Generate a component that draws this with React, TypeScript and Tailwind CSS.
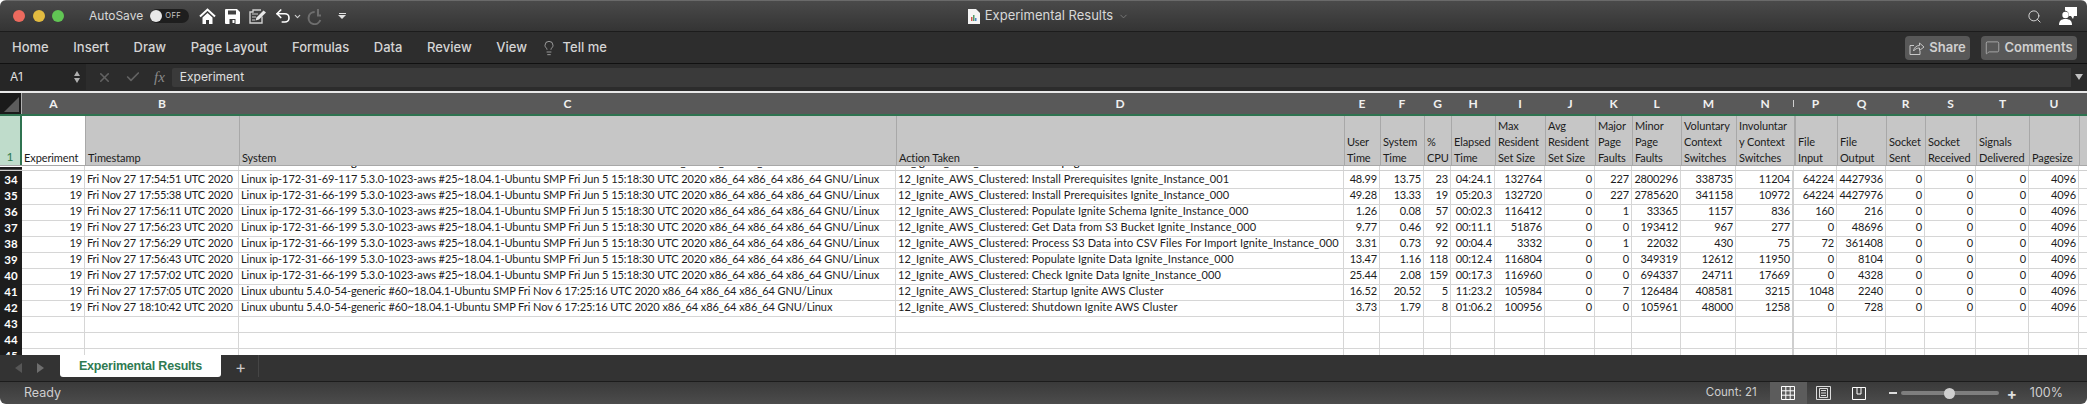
import { ChevronDown, Check, Lightbulb, MessageSquare, Search, Undo2, X } from "lucide-react";

const COLS =
    "grid grid-cols-[22px_63px_154px_657px_448px_36px_44px_27px_44px_50px_50px_37px_49px_55px_58px_43px_49px_39px_51px_53px_50px_8px]";

const ui = "font-['Inter',sans-serif]";
const sheet = "font-['Lato',sans-serif]";

const letters = ["A", "B", "C", "D", "E", "F", "G", "H", "I", "J", "K", "L", "M", "N", "P", "Q", "R", "S", "T", "U", ""];

const headers = [
    "Experiment",
    "Timestamp",
    "System",
    "Action Taken",
    "User\nTime",
    "System\nTime",
    "%\nCPU",
    "Elapsed\nTime",
    "Max\nResident\nSet Size",
    "Avg\nResident\nSet Size",
    "Major\nPage\nFaults",
    "Minor\nPage\nFaults",
    "Voluntary\nContext\nSwitches",
    "Involuntar\ny Context\nSwitches",
    "File\nInput",
    "File\nOutput",
    "Socket\nSent",
    "Socket\nReceived",
    "Signals\nDelivered",
    "Pagesize",
    "",
];

const sysA = (host: string) =>
    `Linux ${host} 5.3.0-1023-aws #25~18.04.1-Ubuntu SMP Fri Jun 5 15:18:30 UTC 2020 x86_64 x86_64 x86_64 GNU/Linux`;
const sysB = "Linux ubuntu 5.4.0-54-generic #60~18.04.1-Ubuntu SMP Fri Nov 6 17:25:16 UTC 2020 x86_64 x86_64 x86_64 GNU/Linux";
const act = "12_Ignite_AWS_Clustered: ";

const rows: { n: number; cells: string[] }[] = [
    { n: 34, cells: ["19", "Fri Nov 27 17:54:51 UTC 2020", sysA("ip-172-31-69-117"), act + "Install Prerequisites Ignite_Instance_001", "48.99", "13.75", "23", "04:24.1", "132764", "0", "227", "2800296", "338735", "11204", "64224", "4427936", "0", "0", "0", "4096"] },
    { n: 35, cells: ["19", "Fri Nov 27 17:55:38 UTC 2020", sysA("ip-172-31-66-199"), act + "Install Prerequisites Ignite_Instance_000", "49.28", "13.33", "19", "05:20.3", "132720", "0", "227", "2785620", "341158", "10972", "64224", "4427976", "0", "0", "0", "4096"] },
    { n: 36, cells: ["19", "Fri Nov 27 17:56:11 UTC 2020", sysA("ip-172-31-66-199"), act + "Populate Ignite Schema Ignite_Instance_000", "1.26", "0.08", "57", "00:02.3", "116412", "0", "1", "33365", "1157", "836", "160", "216", "0", "0", "0", "4096"] },
    { n: 37, cells: ["19", "Fri Nov 27 17:56:23 UTC 2020", sysA("ip-172-31-66-199"), act + "Get Data from S3 Bucket Ignite_Instance_000", "9.77", "0.46", "92", "00:11.1", "51876", "0", "0", "193412", "967", "277", "0", "48696", "0", "0", "0", "4096"] },
    { n: 38, cells: ["19", "Fri Nov 27 17:56:29 UTC 2020", sysA("ip-172-31-66-199"), act + "Process S3 Data into CSV Files For Import Ignite_Instance_000", "3.31", "0.73", "92", "00:04.4", "3332", "0", "1", "22032", "430", "75", "72", "361408", "0", "0", "0", "4096"] },
    { n: 39, cells: ["19", "Fri Nov 27 17:56:43 UTC 2020", sysA("ip-172-31-66-199"), act + "Populate Ignite Data Ignite_Instance_000", "13.47", "1.16", "118", "00:12.4", "116804", "0", "0", "349319", "12612", "11950", "0", "8104", "0", "0", "0", "4096"] },
    { n: 40, cells: ["19", "Fri Nov 27 17:57:02 UTC 2020", sysA("ip-172-31-66-199"), act + "Check Ignite Data Ignite_Instance_000", "25.44", "2.08", "159", "00:17.3", "116960", "0", "0", "694337", "24711", "17669", "0", "4328", "0", "0", "0", "4096"] },
    { n: 41, cells: ["19", "Fri Nov 27 17:57:05 UTC 2020", sysB, act + "Startup Ignite AWS Cluster", "16.52", "20.52", "5", "11:23.2", "105984", "0", "7", "126484", "408581", "3215", "1048", "2240", "0", "0", "0", "4096"] },
    { n: 42, cells: ["19", "Fri Nov 27 18:10:42 UTC 2020", sysB, act + "Shutdown Ignite AWS Cluster", "3.73", "1.79", "8", "01:06.2", "100956", "0", "0", "105961", "48000", "1258", "0", "728", "0", "0", "0", "4096"] },
];

const empty = Array.from({ length: 20 }, () => "");
const textCols = [1, 2, 3];

const menu = ["Home", "Insert", "Draw", "Page Layout", "Formulas", "Data", "Review", "View"];

// system and action columns run a bit wider than the rest
const tracking = (i: number) => (i === 2 ? "tracking-[-0.07px]" : i === 3 ? "tracking-[0.1px]" : "tracking-[-0.15px]");

function HomeIcon() {
    return (
        <svg width="17" height="17" viewBox="0 0 17 17" fill="none">
            <path d="M1 8.5 8.5 1.5 16 8.5" stroke="white" strokeWidth="2" />
            <path d="M3.5 9.5V16h3.5v-4h3v4h3.5V9.5L8.5 5z" fill="white" />
        </svg>
    );
}

function SaveIcon() {
    return (
        <svg width="15" height="15" viewBox="0 0 15 15">
            <path fillRule="evenodd" d="M1 0h11l3 3v11a1 1 0 0 1-1 1H1a1 1 0 0 1-1-1V1a1 1 0 0 1 1-1zm2 1.5v4h8v-4zM4.500 10v5h6v-5z" fill="white" />
            <rect x="7.500" y="11" width="2" height="3" fill="white" />
        </svg>
    );
}

function EditIcon() {
    return (
        <svg width="18" height="15" viewBox="0 0 18 15" fill="none">
            <path d="M13 7.500V14H1V3h3V1h8" stroke="#cfcfcf" strokeWidth="1.400" />
            <path d="M3 5h6M3 8h4M3 11h3" stroke="#cfcfcf" strokeWidth="1" />
            <path d="M6.500 11.500 7.500 8.500 14.500 1.500 17 3.500 10 10.500z" fill="#e8e8e8" />
        </svg>
    );
}

function RedoIcon() {
    return (
        <svg width="16" height="17" viewBox="0 0 16 17" fill="none" stroke="#6e6e6e" strokeWidth="2">
            <path d="M6 4.500a6 6 0 1 0 8 5.500" transform="rotate(20 8 9)" />
            <path d="M11 1v6.500h3" />
        </svg>
    );
}

function ShareIcon() {
    return (
        <svg width="16" height="15" viewBox="0 0 16 15" fill="none" stroke="#c8c8c8" strokeWidth="1">
            <path d="M5 5.500H1v9h10V11" />
            <path d="M4.500 11c.5-3.500 3-5.500 6-5.500V3l4.500 4-4.500 3.500V8c-2.500 0-4.500 1-6 3z" />
        </svg>
    );
}

function UserIcon() {
    return (
        <svg width="18" height="18" viewBox="0 0 18 18" fill="white">
            <path d="M6 0h12v9h-3l-1 3-2-3h-2c0-3-1-5-4-5.500z" />
            <circle cx="6.500" cy="8" r="3.200" />
            <path d="M0 18c0-4 2-6 6.500-6S13 14 13 18z" />
        </svg>
    );
}

function FileIcon() {
    return (
        <svg width="12" height="15" viewBox="0 0 12 15">
            <path d="M0 0h8l4 4v11H0z" fill="#f4f4f4" />
            <rect x="3" y="8" width="1.500" height="4" fill="#d0564b" />
            <rect x="5" y="6" width="1.500" height="6" fill="#4f9a6a" />
            <rect x="7" y="9" width="1.500" height="3" fill="#4a83c6" />
        </svg>
    );
}

function GridIcon() {
    return (
        <svg width="14" height="14" viewBox="0 0 14 14" fill="none" stroke="white" strokeWidth="1">
            <path d="M.5.500h13v13H.500zM.5 4.800h13M.5 9.200h13M4.800.500v13M9.200.500v13" />
        </svg>
    );
}

function PageIcon() {
    return (
        <svg width="15" height="14" viewBox="0 0 15 14" fill="none" stroke="#dcdcdc" strokeWidth="1">
            <path d="M.5.500h14v13H.500z" />
            <path d="M3.500 2.500h8v9h-8zM5 4.500h5M5 7h5M5 9.500h5" />
        </svg>
    );
}

function BreakIcon() {
    return (
        <svg width="14" height="13" viewBox="0 0 14 13" fill="none" stroke="white" strokeWidth="1">
            <path d="M.5.500h13v12H.500zM5 .500v6.500h4V.500" />
        </svg>
    );
}

function RowHeader({ label, className = "" }: { label: string; className?: string }) {
    return (
        <div className={`flex items-center justify-center border-b border-[#4a4a4a] bg-[#1d1d1d] text-[11.500px] font-bold text-white ${className}`}>
            {label}
        </div>
    );
}

function Row({ n, cells }: { n: number; cells: string[] }) {
    return (
        <div className={`${COLS} h-4`}>
            <RowHeader label={String(n)} />
            {cells.map((c, i) => (
                <div
                    key={i}
                    className={`overflow-hidden whitespace-nowrap border-b border-r border-[#d6d6d6] px-[2px] text-[11px] leading-[15px] text-[#1c1c1c] ${tracking(i)} ${
                        textCols.includes(i) ? "text-left" : "text-right"
                    } ${i === 13 ? "border-r-[2px] border-r-[#cfcfcf]" : ""}`}
                >
                    {c}
                </div>
            ))}
            <div className="border-b border-[#d6d6d6]" />
        </div>
    );
}

export default function App() {
    return (
        <div className={`flex h-[404px] w-[2087px] flex-col overflow-hidden rounded-[6px] bg-white ${ui}`}>
            {/* title bar */}
            <div className="grid h-8 shrink-0 grid-cols-[1fr_auto_1fr] items-center border-t border-b border-t-[#6a6a6a] border-b-[#1c1c1c] bg-gradient-to-b from-[#4a4a4a] to-[#343434]">
                <div className="flex items-center">
                    <div className="ml-[13px] flex gap-[7.500px]">
                        <span className="size-[12px] rounded-full bg-[#ec6a5e]" />
                        <span className="size-[12px] rounded-full bg-[#e2bb40]" />
                        <span className="size-[12px] rounded-full bg-[#61c554]" />
                    </div>
                    <span className="ml-[25px] text-[12px] text-[#d8d8d8]">AutoSave</span>
                    <div className="ml-[7px] flex h-[14px] w-[39px] items-center rounded-full bg-[#1e1e1e]">
                        <span className="size-[12px] rounded-full bg-[#e8e8e8]" />
                        <span className="ml-[3px] text-[7.500px] tracking-[0.5px] text-[#c8c8c8]">OFF</span>
                    </div>
                    <div className="ml-[10px] flex items-center">
                        <HomeIcon />
                    </div>
                    <div className="ml-[9px] flex items-center">
                        <SaveIcon />
                    </div>
                    <div className="ml-[9px] flex items-center">
                        <EditIcon />
                    </div>
                    <Undo2 className="ml-[7px] size-[18px] text-white" strokeWidth={2.200} />
                    <ChevronDown className="ml-[1px] size-[9px] text-[#d0d0d0]" strokeWidth={3} />
                    <div className="ml-[5px] flex items-center">
                        <RedoIcon />
                    </div>
                    <div className="ml-[15px] flex w-[8px] flex-col items-center gap-[1px]">
                        <span className="h-[1.500px] w-[7px] bg-[#e0e0e0]" />
                        <span className="h-0 w-0 border-x-[4px] border-t-[4px] border-x-transparent border-t-[#e0e0e0]" />
                    </div>
                </div>
                <div className="flex items-center gap-[5px] pl-[10px] text-[13px] text-[#d8d8d8]">
                    <FileIcon />
                    <span>Experimental Results</span>
                    <ChevronDown className="size-[11px] text-[#7a7a7a]" />
                </div>
                <div className="flex items-center justify-end">
                    <Search className="size-[15px] text-[#dcdcdc]" strokeWidth={1.500} />
                    <div className="ml-[17px] mr-[10px] flex items-center">
                        <UserIcon />
                    </div>
                </div>
            </div>

            {/* ribbon tabs */}
            <div className="flex h-[32px] shrink-0 items-center justify-between border-b-[1.500px] border-[#111] bg-[#2d2d2d]">
                <div className="flex items-center gap-[24.600px] pl-3 text-[13px] font-medium text-[#d4d4d4]">
                    {menu.map((m) => (
                        <span key={m}>{m}</span>
                    ))}
                    <span className="-ml-[11px] flex items-center gap-[4px]">
                        <Lightbulb className="size-[16px] text-[#cfcfcf]" strokeWidth={1} />
                        <span className="ml-[2px]">Tell me</span>
                    </span>
                </div>
                <div className="flex items-center gap-[11px] pr-[10px] text-[13px] font-semibold text-[#d0d0d0]">
                    <div className="flex h-[24px] w-[65px] items-center justify-center gap-[4px] rounded-[4px] bg-[#585858]">
                        <ShareIcon />
                        Share
                    </div>
                    <div className="flex h-[24px] w-[96px] items-center justify-center gap-[4px] rounded-[4px] bg-[#585858]">
                        <MessageSquare className="size-[15px]" strokeWidth={1} />
                        Comments
                    </div>
                </div>
            </div>

            {/* formula bar */}
            <div className="flex h-[26px] shrink-0 items-center bg-[#2c2c2c] text-[12px] text-[#e0e0e0]">
                <div className="flex h-full w-[86px] items-center justify-between bg-[#262626] pl-[10px] pr-[6px]">
                    <span>A1</span>
                    <div className="flex flex-col gap-[2px]">
                        <span className="h-0 w-0 border-x-[3.500px] border-b-[5px] border-x-transparent border-b-[#b0b0b0]" />
                        <span className="h-0 w-0 border-x-[3.500px] border-t-[5px] border-x-transparent border-t-[#b0b0b0]" />
                    </div>
                </div>
                <X className="ml-[11px] size-[15px] text-[#626262]" strokeWidth={2.500} />
                <Check className="ml-[13px] size-[16px] text-[#626262]" strokeWidth={2.500} />
                <span className="ml-[13px] font-['Liberation_Serif',serif] text-[15px] italic text-[#8a8a8a]">fx</span>
                <div className="ml-[7px] flex h-[19px] flex-1 items-center rounded-l-[2px] bg-[#3a3a3a] pl-2 text-[12px]">Experiment</div>
                <div className="flex w-[16px] justify-center">
                    <span className="h-0 w-0 border-x-[4px] border-t-[6px] border-x-transparent border-t-[#c0c0c0]" />
                </div>
            </div>

            <div className="h-[1px] shrink-0 bg-[#2c2c2c]" />
            <div className="h-[2px] shrink-0 bg-[#e8e8e8]" />

            {/* sheet */}
            <div className={`flex-1 overflow-hidden bg-white ${sheet}`}>
                <div className={`${COLS} h-[23px] border-b-[2px] border-[#2f7350] bg-[#595959]`}>
                    <div className="relative border-r border-[#b0b0b0] bg-[#1a1a1a]">
                        <span className="absolute bottom-[2px] right-[2px] h-0 w-0 border-b-[15px] border-l-[15px] border-b-[#5c5c5c] border-l-transparent" />
                    </div>
                    {letters.map((l, i) => (
                        <div key={i} className="relative text-center text-[12px] font-bold leading-[21px] text-[#f0f0f0]">
                            {l}
                            {l === "N" && <span className="absolute right-0 top-[7px] h-[7px] w-[1px] bg-[#d0d0d0]" />}
                        </div>
                    ))}
                </div>
                <div className={`${COLS} h-[49px]`}>
                    <div className="flex items-end justify-center border-r-[2px] border-[#2f7350] bg-[#bfdccb] pb-[1px] text-[12px] leading-[15px] text-[#2e7a50]">1</div>
                    {headers.map((h, i) => (
                        <div
                            key={i}
                            className={`flex items-end overflow-hidden whitespace-pre-line px-[2px] text-[11px] leading-[16px] tracking-[-0.1px] text-[#1c1c1c] ${
                                i === 0 ? "bg-white" : "border-l-[1px] border-[#a8a8a8] bg-[#c6c6c6]"
                            } ${i === 14 ? "border-l-[2px]" : ""}`}
                        >
                            <span className="translate-y-[1px]">{h}</span>
                        </div>
                    ))}
                </div>
                <div className="h-[1px] bg-[#a8a8a8]" />
                <div className={`${COLS} h-[4px]`}>
                    <RowHeader label="" className="mt-[1px]" />
                    {empty.map((_, i) => (
                        <div key={i} className={`flex items-end overflow-hidden whitespace-nowrap border-r border-[#d6d6d6] px-[2px] text-[11px] leading-[15px] ${tracking(i)}`}>
                            <span className="translate-y-[-1px]">{i === 2 ? sysB : i === 3 ? act + "Startup Ignite AWS Cluster" : ""}</span>
                        </div>
                    ))}
                </div>
                <div className="h-[1px] bg-[#d0d0d0]" />
                {rows.map((r) => (
                    <Row key={r.n} n={r.n} cells={r.cells} />
                ))}
                <Row n={43} cells={empty} />
                <Row n={44} cells={empty} />
                <Row n={45} cells={empty} />
            </div>

            {/* sheet tabs */}
            <div className="flex h-[27px] shrink-0 items-start border-b border-[#1c1c1c] bg-[#333333]">
                <span className="ml-[15px] mt-[8px] h-0 w-0 border-y-[5px] border-r-[7px] border-y-transparent border-r-[#565656]" />
                <span className="ml-[15px] mt-[8px] h-0 w-0 border-y-[5px] border-l-[7px] border-y-transparent border-l-[#6e6e6e]" />
                <div className="ml-[16px] flex h-[22px] w-[161px] items-center justify-center rounded-b-[3px] bg-white font-['Liberation_Sans',sans-serif] text-[12.500px] font-bold tracking-[-0.2px] text-[#2f7a52]">
                    Experimental Results
                </div>
                <span className="ml-[14px] mt-[2px] text-[17px] leading-[20px] text-[#c8c8c8]">+</span>
                <span className="ml-[12px] h-[22px] w-[1px] bg-[#454545]" />
            </div>

            {/* status bar */}
            <div className="flex h-[22px] shrink-0 items-center bg-gradient-to-b from-[#3a3a3a] to-[#4c4c4c] text-[12.500px] text-[#cfcfcf]">
                <span className="ml-[24px]">Ready</span>
                <span className="ml-auto text-[11.500px]">Count: 21</span>
                <div className="ml-[13px] flex h-full w-[37px] items-center justify-center bg-[#5c5c5c]">
                    <GridIcon />
                </div>
                <div className="ml-[9px] flex items-center">
                    <PageIcon />
                </div>
                <div className="ml-[21px] flex items-center">
                    <BreakIcon />
                </div>
                <span className="ml-[23px] h-[2.500px] w-[8px] bg-[#dcdcdc]" />
                <div className="relative ml-[4px] h-[4px] w-[98px] rounded-full bg-[#7e7e7e]">
                    <span className="absolute left-[43px] top-[-3.500px] size-[11px] rounded-full bg-[#cfcfcf]" />
                </div>
                <span className="ml-[8px] text-[15px] font-bold leading-none text-[#e0e0e0]">+</span>
                <span className="ml-[13px] mr-[24px]">100%</span>
            </div>
        </div>
    );
}
